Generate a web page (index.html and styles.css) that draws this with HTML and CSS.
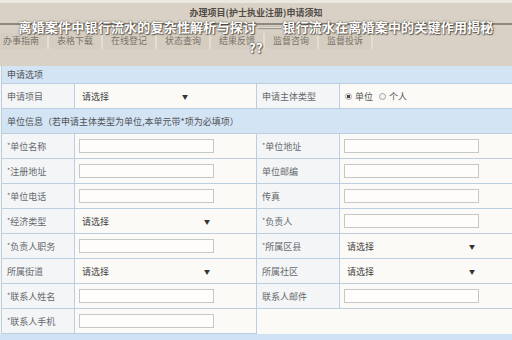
FILE: index.html
```html
<!DOCTYPE html>
<html lang="zh-CN">
<head>
    <meta charset="UTF-8">
    <meta name="viewport" content="width=device-width, initial-scale=1.0">
    <title>护士执业注册申请</title>
    <link rel="stylesheet" href="styles.css">
</head>
<body>
    <div class="page">
        <div class="top">
            <div class="notice">办理项目(护士执业注册)申请须知</div>
            <div class="rule"></div>
            <ul class="tabs">
                <li>办事指南</li>
                <li>表格下载</li>
                <li>在线登记</li>
                <li>状态查询</li>
                <li>结果反馈</li>
                <li>监督咨询</li>
                <li>监督投诉</li>
            </ul>
        </div>

        <h1 class="headline">离婚案件中银行流水的复杂性解析与探讨——银行流水在离婚案中的关键作用揭秘<span class="tail">??</span></h1>

        <table class="form">
            <colgroup>
                <col class="c-label">
                <col class="c-value">
                <col class="c-label2">
                <col class="c-value2">
            </colgroup>
            <tr class="sec sec-first">
                <th colspan="4">申请选项</th>
            </tr>
            <tr class="row">
                <td class="label">申请项目</td>
                <td class="value"><div class="pick pick-short"><span>请选择</span><i>▼</i></div></td>
                <td class="label">申请主体类型</td>
                <td class="value">
                    <span class="choice"><span class="radio on"></span>单位</span>
                    <span class="choice"><span class="radio"></span>个人</span>
                </td>
            </tr>
            <tr class="sec">
                <th colspan="4">单位信息（若申请主体类型为单位,本单元带*项为必填项）</th>
            </tr>
            <tr class="row">
                <td class="label"><b>*</b>单位名称</td>
                <td class="value"><input type="text"></td>
                <td class="label"><b>*</b>单位地址</td>
                <td class="value"><input type="text"></td>
            </tr>
            <tr class="row">
                <td class="label"><b>*</b>注册地址</td>
                <td class="value"><input type="text"></td>
                <td class="label">单位邮编</td>
                <td class="value"><input type="text"></td>
            </tr>
            <tr class="row">
                <td class="label"><b>*</b>单位电话</td>
                <td class="value"><input type="text"></td>
                <td class="label">传真</td>
                <td class="value"><input type="text"></td>
            </tr>
            <tr class="row">
                <td class="label"><b>*</b>经济类型</td>
                <td class="value"><div class="pick"><span>请选择</span><i>▼</i></div></td>
                <td class="label"><b>*</b>负责人</td>
                <td class="value"><input type="text"></td>
            </tr>
            <tr class="row">
                <td class="label"><b>*</b>负责人职务</td>
                <td class="value"><input type="text"></td>
                <td class="label"><b>*</b>所属区县</td>
                <td class="value"><div class="pick"><span>请选择</span><i>▼</i></div></td>
            </tr>
            <tr class="row">
                <td class="label">所属街道</td>
                <td class="value"><div class="pick"><span>请选择</span><i>▼</i></div></td>
                <td class="label">所属社区</td>
                <td class="value"><div class="pick"><span>请选择</span><i>▼</i></div></td>
            </tr>
            <tr class="row">
                <td class="label"><b>*</b>联系人姓名</td>
                <td class="value"><input type="text"></td>
                <td class="label">联系人邮件</td>
                <td class="value"><input type="text"></td>
            </tr>
            <tr class="row">
                <td class="label"><b>*</b>联系人手机</td>
                <td class="value"><input type="text"></td>
                <td class="blank" colspan="2"></td>
            </tr>
        </table>
        <div class="foot"></div>
    </div>
</body>
</html>
```

FILE: styles.css
```css
body {
    margin: 0;
    background-color: #f8f5f0;
    font-family: "Noto Sans CJK SC", "Noto Sans", sans-serif;
}
.page {
    position: relative;
    width: 512px;
    height: 340px;
    overflow: hidden;
}
.top {
    height: 66px;
    box-sizing: border-box;
    border-top: 3px solid #ebe7e1;
    background-color: #d9d1c5;
}
.notice {
    padding-top: 4px;
    text-align: center;
    font-size: 9px;
    line-height: 12px;
    font-weight: bold;
    color: #514c45;
}
.rule {
    height: 2px;
    margin-top: 4px;
    background-color: #8e887f;
}
.tabs {
    display: flex;
    margin: 8px 0 0 -5px;
    padding: 0;
    list-style: none;
    font-size: 9px;
    line-height: 14px;
    color: #79736a;
}
.tabs li {
    padding: 1px 8px;
    background-color: #d5cdc0;
    border-right: 2px solid #e3ddd3;
}

/* title laid over the header */
.headline {
    position: absolute;
    top: 20px;
    left: 0;
    right: 0;
    margin: 0;
    text-align: center;
    font-size: 13px;
    line-height: 14px;
    letter-spacing: 0.2px;
    font-weight: bold;
    color: #fff;
    text-shadow: 0 0 2px rgba(40, 35, 30, 0.8), 1px 1px 1px rgba(40, 35, 30, 0.6);
}
.headline .tail {
    display: block;
    margin-top: 7px;
}

.form {
    width: 511px;
    margin-left: 1px;
    border-collapse: collapse;
    table-layout: fixed;
    font-size: 9px;
}
.c-label { width: 73px; }
.c-value { width: 182px; }
.c-label2 { width: 83px; }
.c-value2 { width: 173px; }
.form th,
.form td {
    border: 1px solid #bccfe1;
    padding: 0;
    vertical-align: middle;
}
.sec th {
    height: 24px;
    padding-left: 5px;
    text-align: left;
    font-weight: normal;
    color: #4f5257;
    background-color: #d3e4f4;
}
.sec-first th {
    height: 17px;
    border-top: none;
}
.row td {
    height: 24px;
}
.label {
    padding-left: 5px !important;
    color: #66696d;
    background-color: #f3f5f6;
    white-space: nowrap;
}
.label b {
    font-weight: normal;
    font-size: 7px;
    vertical-align: 2px;
}
.value {
    padding-left: 4px !important;
    background-color: #fcfaf6;
}
.blank {
    border: none !important;
    border-top: 1px solid #bccfe1 !important;
    background-color: #fcfaf6;
}
.value input {
    display: block;
    width: 135px;
    height: 14px;
    margin: 0;
    padding: 0;
    box-sizing: border-box;
    border: 1px solid #c7c7c5;
    background-color: #fefdfb;
}
.pick {
    display: flex;
    justify-content: space-between;
    align-items: center;
    width: 131px;
    padding-left: 3px;
    box-sizing: border-box;
    color: #3f3f3f;
}
.pick-short {
    width: 109px;
}
.pick i {
    font-style: normal;
    font-size: 6px;
    color: #333;
}
.choice {
    display: inline-flex;
    align-items: center;
    margin-right: 3px;
    color: #555;
}
.radio {
    width: 7px;
    height: 7px;
    margin: 0 3px 0 1px;
    box-sizing: border-box;
    border: 1px solid #a5a5a5;
    border-radius: 50%;
    background-color: #f2f2f2;
}
.radio.on {
    background: radial-gradient(circle, #444 0 1.6px, #f2f2f2 2px);
}
.foot {
    height: 12px;
    background-color: #cfe2f4;
}
```
